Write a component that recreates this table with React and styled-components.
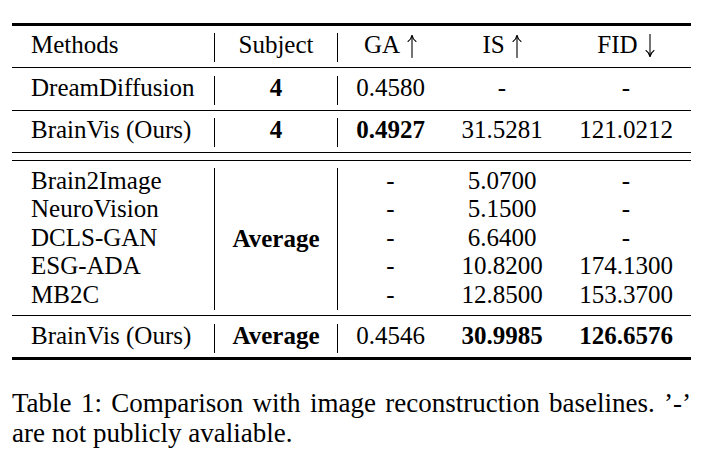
import React from 'react';
import styled, { createGlobalStyle } from 'styled-components';

const Global = createGlobalStyle`
  html, body { margin: 0; padding: 0; background: #fff; }
  body {
    font-family: "Liberation Serif", "Times New Roman", serif;
    color: #000;
  }
`;

const Page = styled.div`
  width: 679px;
  padding: 23px 0 0 12px;
`;

const Table = styled.div`
  border-top: 3px solid #000;
  border-bottom: 3px solid #000;
  font-size: 25px;
`;

const Row = styled.div`
  display: grid;
  grid-template-columns: 202px 123px 106px 118px 130px;
  padding: ${p => p.$top}px 0 ${p => p.$bottom}px;
  border-bottom: ${p => (p.$rule ? '1px solid #000' : 'none')};
`;

const DoubleGap = styled.div`
  height: 7px;
  border-bottom: 1px solid #000;
`;

const Cell = styled.div`
  box-sizing: border-box;
  height: ${p => p.$h || 29}px;
  line-height: 24px;
  padding-left: ${p => (p.$left ? '19px' : '0')};
  text-align: ${p => (p.$left ? 'left' : 'center')};
  border-left: ${p => (p.$sep ? '1px solid #000' : 'none')};
  font-weight: ${p => (p.$bold ? 700 : 400)};
  white-space: nowrap;
`;

const Stack = styled.div`
  box-sizing: border-box;
  height: 142px;
  display: flex;
  flex-direction: column;
  justify-content: ${p => (p.$center ? 'center' : 'flex-start')};
  padding-left: ${p => (p.$left ? '19px' : '0')};
  text-align: ${p => (p.$left ? 'left' : 'center')};
  border-left: ${p => (p.$sep ? '1px solid #000' : 'none')};
  font-weight: ${p => (p.$bold ? 700 : 400)};
  white-space: nowrap;
`;

const Line = styled.div`
  line-height: 28.4px;
  margin-top: ${p => (p.$first ? '-1px' : '0')};
`;

const ArrowSvg = styled.svg`
  display: inline-block;
  width: 10px;
  height: 24px;
  margin-left: 7px;
  vertical-align: -5px;
`;

const Caption = styled.p`
  margin: 27.5px 0 0;
  font-size: 27px;
  line-height: 30px;
  text-align: justify;
`;

function Arrow({ down }) {
  return (
    <ArrowSvg viewBox="0 0 10 24" aria-hidden="true">
      <g
        fill="none"
        stroke="#000"
        strokeWidth="1.1"
        strokeLinecap="round"
        transform={down ? 'rotate(180 5 12)' : undefined}
      >
        <path d="M5 1.5 V23.5" />
        <path d="M1 7.5 Q4 5.5 5 1.5 Q6 5.5 9 7.5" />
      </g>
    </ArrowSvg>
  );
}

const multi = [
  ['Brain2Image', '-', '5.0700', '-'],
  ['NeuroVision', '-', '5.1500', '-'],
  ['DCLS-GAN', '-', '6.6400', '-'],
  ['ESG-ADA', '-', '10.8200', '174.1300'],
  ['MB2C', '-', '12.8500', '153.3700'],
];

export default function App() {
  return (
    <>
      <Global />
      <Page>
        <Table>
          <Row $top={7} $bottom={5} $rule>
            <Cell $left>Methods</Cell>
            <Cell $sep>Subject</Cell>
            <Cell $sep>GA<Arrow /></Cell>
            <Cell>IS<Arrow /></Cell>
            <Cell>FID<Arrow down /></Cell>
          </Row>
          <Row $top={8} $bottom={5} $rule>
            <Cell $left>DreamDiffusion</Cell>
            <Cell $sep $bold>4</Cell>
            <Cell $sep>0.4580</Cell>
            <Cell>-</Cell>
            <Cell>-</Cell>
          </Row>
          <Row $top={7} $bottom={5} $rule>
            <Cell $left>BrainVis (Ours)</Cell>
            <Cell $sep $bold>4</Cell>
            <Cell $sep $bold>0.4927</Cell>
            <Cell>31.5281</Cell>
            <Cell>121.0212</Cell>
          </Row>
          <DoubleGap />
          <Row $top={7} $bottom={5} $rule>
            <Stack $left>
              {multi.map((r, i) => (
                <Line key={r[0]} $first={i === 0}>{r[0]}</Line>
              ))}
            </Stack>
            <Stack $sep $center $bold>
              <Line>Average</Line>
            </Stack>
            <Stack $sep>
              {multi.map((r, i) => (
                <Line key={i} $first={i === 0}>{r[1]}</Line>
              ))}
            </Stack>
            <Stack>
              {multi.map((r, i) => (
                <Line key={i} $first={i === 0}>{r[2]}</Line>
              ))}
            </Stack>
            <Stack>
              {multi.map((r, i) => (
                <Line key={i} $first={i === 0}>{r[3]}</Line>
              ))}
            </Stack>
          </Row>
          <Row $top={8} $bottom={4}>
            <Cell $left>BrainVis (Ours)</Cell>
            <Cell $sep $bold>Average</Cell>
            <Cell $sep>0.4546</Cell>
            <Cell $bold>30.9985</Cell>
            <Cell $bold>126.6576</Cell>
          </Row>
        </Table>
        <Caption>
          Table 1: Comparison with image reconstruction baselines. ’-’ are not publicly avaliable.
        </Caption>
      </Page>
    </>
  );
}
